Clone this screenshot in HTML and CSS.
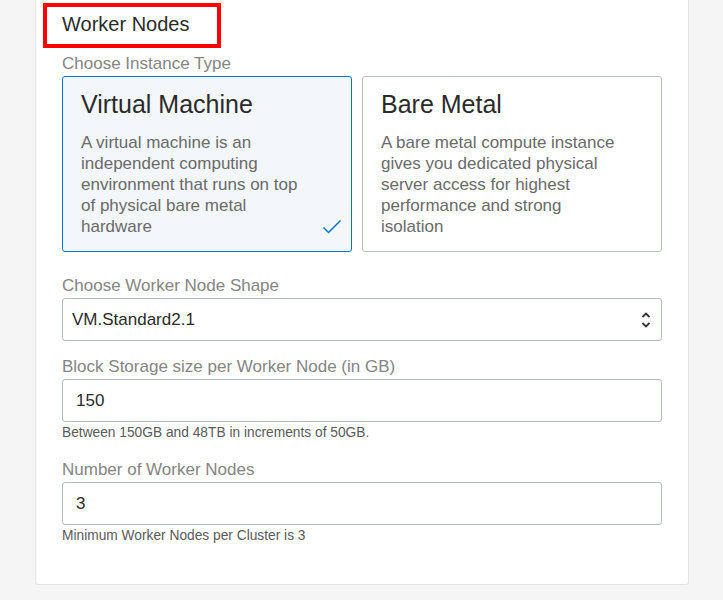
FILE: index.html
```html
<!DOCTYPE html>
<html lang="en">
<head>
<meta charset="utf-8">
<title>Worker Nodes</title>
<link rel="stylesheet" href="styles.css">
</head>
<body>
<div class="panel">
  <h2 class="section-title">Worker Nodes</h2>

  <div class="field-label first">Choose Instance Type</div>
  <div class="cards">
    <div class="card selected">
      <div class="card-title">Virtual Machine</div>
      <div class="card-desc">A virtual machine is an independent computing environment that runs on top of physical bare metal hardware</div>
      <svg class="check" width="20" height="16" viewBox="0 0 20 16"><path d="M1.5 8.5 L6.5 13.5 L18.5 1.5" fill="none" stroke="#0572ce" stroke-width="1.5"/></svg>
    </div>
    <div class="card">
      <div class="card-title">Bare Metal</div>
      <div class="card-desc">A bare metal compute instance gives you dedicated physical server access for highest performance and strong isolation</div>
    </div>
  </div>

  <div class="field-label gap-lg">Choose Worker Node Shape</div>
  <div class="input select">
    <span>VM.Standard2.1</span>
    <svg class="chev" width="10" height="18" viewBox="0 0 10 18"><path d="M1.5 6 L5 2.5 L8.5 6 M1.5 12 L5 15.5 L8.5 12" fill="none" stroke="#333" stroke-width="1.8"/></svg>
  </div>

  <div class="field-label">Block Storage size per Worker Node (in GB)</div>
  <div class="input text">150</div>
  <div class="help">Between 150GB and 48TB in increments of 50GB.</div>

  <div class="field-label after-help">Number of Worker Nodes</div>
  <div class="input text">3</div>
  <div class="help">Minimum Worker Nodes per Cluster is 3</div>
</div>
</body>
</html>
```

FILE: styles.css
```css
html, body {
  margin: 0;
  padding: 0;
  background: #f5f5f5;
  font-family: "Liberation Sans", Arial, sans-serif;
}

.panel {
  margin-left: 35px;
  width: 600px;
  padding: 0 26px 40px 26px;
  background: #ffffff;
  border: 1px solid #e3e3e3;
  border-top: none;
  border-radius: 0 0 3px 3px;
}

.section-title {
  display: inline-block;
  margin: 3px 0 0 -19px;
  padding: 6px 28px 8px 15px;
  border: 4px solid #ff0000;
  font-size: 20px;
  line-height: 23px;
  font-weight: normal;
  color: #2b2b2b;
}

.field-label {
  margin-top: 16px;
  margin-bottom: 2px;
  font-size: 17px;
  line-height: 20px;
  color: #858585;
}
.field-label.first { margin-top: 6px; }
.field-label.gap-lg { margin-top: 24px; }
.field-label.after-help { margin-top: 19px; }

.cards {
  display: flex;
  gap: 10px;
}

.card {
  position: relative;
  flex: 1;
  height: 176px;
  box-sizing: border-box;
  padding: 12px 34px 0 18px;
  border: 1px solid #b9bfc6;
  border-radius: 3px;
  background: #ffffff;
}
.card.selected {
  flex: 0 0 290px;
  padding-right: 42px;
  border-color: #0572ce;
  background: #f3f7fc;
}

.card-title {
  font-size: 25px;
  line-height: 30px;
  color: #2b2b2b;
}

.card-desc {
  margin-top: 13px;
  font-size: 17px;
  line-height: 21px;
  color: #6a6a6a;
}

.check {
  position: absolute;
  right: 9px;
  bottom: 16px;
}

.input {
  height: 41px;
  border: 1px solid #b3bac2;
  border-radius: 3px;
  font-size: 17px;
  line-height: 41px;
  color: #2b2b2b;
  background: #ffffff;
}
.input.select {
  display: flex;
  align-items: center;
  justify-content: space-between;
  padding: 0 10px 0 9px;
}
.input.select .chev { display: block; }
.input.text {
  padding: 0 13px;
}

.help {
  margin-top: 3px;
  font-size: 13.75px;
  line-height: 16px;
  color: #5a5a5a;
}
```
